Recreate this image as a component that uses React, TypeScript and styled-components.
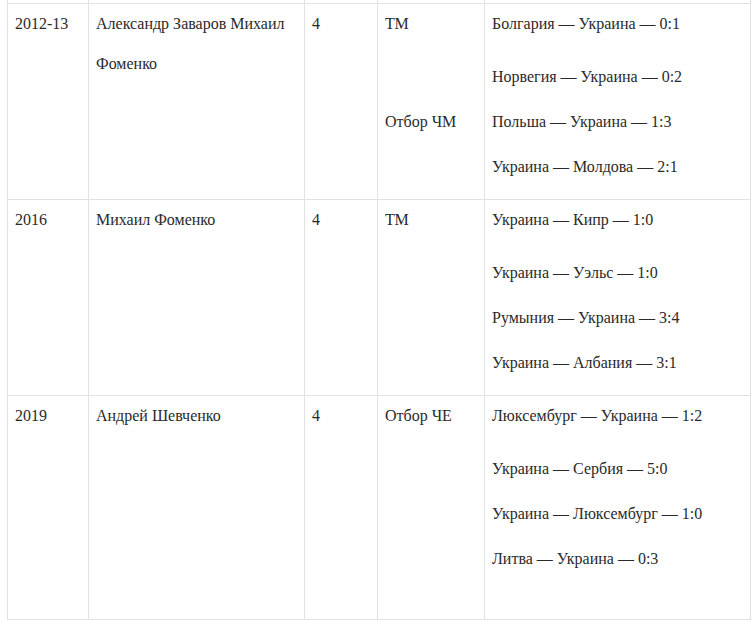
import styled, { createGlobalStyle } from "styled-components";

const GlobalStyle = createGlobalStyle`
  html, body {
    margin: 0;
    padding: 0;
    background: #ffffff;
  }
`;

const Page = styled.div`
  width: 753px;
  height: 625px;
  overflow: hidden;
  padding-left: 7px;
  box-sizing: border-box;
`;

const Table = styled.table`
  width: 743px;
  margin-top: -17px;
  border-collapse: collapse;
  table-layout: fixed;
  font-family: "Liberation Serif", "Times New Roman", serif;
  font-size: 16px;
  color: #2a2a2a;
`;

const Row = styled.tr<{ $height: number }>`
  height: ${(p) => p.$height}px;
`;

const Cell = styled.td`
  border: 1px solid #e1e1e1;
  padding: 8px 7px 0;
  vertical-align: top;
  font-family: "Liberation Serif", "Times New Roman", serif;
`;

const Line = styled.p<{ $gap?: number }>`
  margin: ${(p) => p.$gap ?? 0}px 0 0;
  line-height: 24px;
  white-space: nowrap;
  font-family: "Liberation Serif", "Times New Roman", serif;
`;

type Entry = { text: string; gap?: number };

type Season = {
  years: string;
  coach: Entry[];
  count: string;
  tournaments: Entry[];
  matches: Entry[];
  height: number;
};

const seasons: Season[] = [
  {
    years: "2012-13",
    coach: [{ text: "Александр Заваров Михаил" }, { text: "Фоменко", gap: 16 }],
    count: "4",
    tournaments: [{ text: "ТМ" }, { text: "Отбор ЧМ", gap: 74 }],
    matches: [
      { text: "Болгария — Украина — 0:1" },
      { text: "Норвегия — Украина — 0:2", gap: 29 },
      { text: "Польша — Украина — 1:3", gap: 21 },
      { text: "Украина — Молдова — 2:1", gap: 21 },
    ],
    height: 196,
  },
  {
    years: "2016",
    coach: [{ text: "Михаил Фоменко" }],
    count: "4",
    tournaments: [{ text: "ТМ" }],
    matches: [
      { text: "Украина — Кипр — 1:0" },
      { text: "Украина — Уэльс — 1:0", gap: 29 },
      { text: "Румыния — Украина — 3:4", gap: 21 },
      { text: "Украина — Албания — 3:1", gap: 21 },
    ],
    height: 196,
  },
  {
    years: "2019",
    coach: [{ text: "Андрей Шевченко" }],
    count: "4",
    tournaments: [{ text: "Отбор ЧЕ" }],
    matches: [
      { text: "Люксембург — Украина — 1:2" },
      { text: "Украина — Сербия — 5:0", gap: 29 },
      { text: "Украина — Люксембург — 1:0", gap: 21 },
      { text: "Литва — Украина — 0:3", gap: 21 },
    ],
    height: 224,
  },
];

function Lines({ items }: { items: Entry[] }) {
  return (
    <>
      {items.map((item, i) => (
        <Line key={i} $gap={item.gap}>
          {item.text}
        </Line>
      ))}
    </>
  );
}

export default function App() {
  return (
    <>
      <GlobalStyle />
      <Page>
        <Table>
          <colgroup>
            <col style={{ width: 81 }} />
            <col style={{ width: 216 }} />
            <col style={{ width: 73 }} />
            <col style={{ width: 107 }} />
            <col style={{ width: 266 }} />
          </colgroup>
          <tbody>
            {/* tail of the previous row, scrolled mostly out of view */}
            <Row $height={20}>
              <Cell />
              <Cell />
              <Cell />
              <Cell />
              <Cell />
            </Row>
            {seasons.map((s) => (
              <Row key={s.years} $height={s.height}>
                <Cell>
                  <Line>{s.years}</Line>
                </Cell>
                <Cell>
                  <Lines items={s.coach} />
                </Cell>
                <Cell>
                  <Line>{s.count}</Line>
                </Cell>
                <Cell>
                  <Lines items={s.tournaments} />
                </Cell>
                <Cell>
                  <Lines items={s.matches} />
                </Cell>
              </Row>
            ))}
          </tbody>
        </Table>
      </Page>
    </>
  );
}
